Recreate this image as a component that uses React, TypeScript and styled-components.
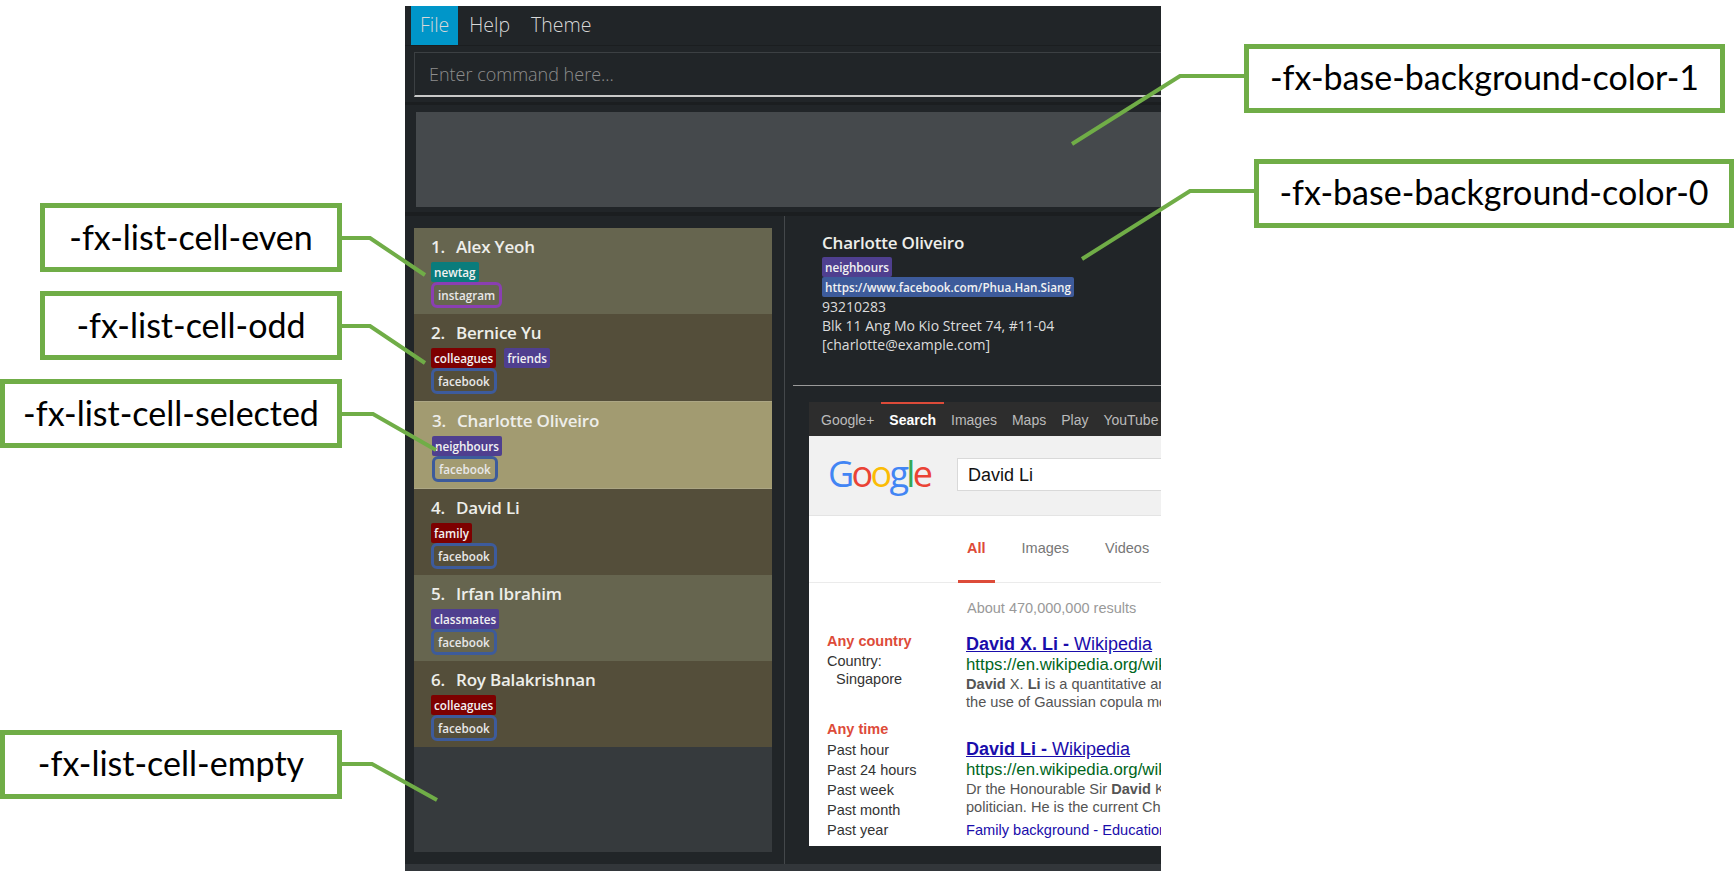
import styled, { createGlobalStyle } from "styled-components";

const GlobalStyle = createGlobalStyle`
  html, body {
    margin: 0;
    background: #fff;
    font-family: "Open Sans", "Noto Sans", sans-serif;
  }
`;

const Page = styled.div`
  position: relative;
  display: grid;
  grid-template-columns: 405px 756px 1fr;
  width: 1735px;
  height: 871px;
  overflow: hidden;
`;

// Callouts
const LeftNotes = styled.div`
  display: flex;
  flex-direction: column;
  align-items: flex-end;
  padding: 203px 63px 0 0;
`;
const RightNotes = styled.div`
  display: flex;
  flex-direction: column;
  padding: 44px 0 0 83px;
`;
const Note = styled.div<{ $w: number; $mt?: number; $ml?: number; $lh?: number }>`
  box-sizing: border-box;
  flex: none;
  width: ${({ $w }) => $w}px;
  height: 69px;
  margin-top: ${({ $mt = 0 }) => $mt}px;
  margin-left: ${({ $ml = 0 }) => $ml}px;
  border: 5px solid #70ad47;
  background: #fff;
  color: #000;
  font: 34px/${({ $lh = 56 }) => $lh}px Lato, "Liberation Sans", sans-serif;
  text-align: center;
  white-space: nowrap;
`;
const Leaders = styled.svg`
  position: absolute;
  inset: 0;
  pointer-events: none;
`;

// App window
const Window = styled.div`
  display: flex;
  flex-direction: column;
  margin-top: 6px;
  height: 865px;
  overflow: hidden;
  background: #212528;
  color: #e4e4e4;
`;
const MenuBar = styled.div`
  display: flex;
  flex: none;
  height: 39px;
  padding-left: 6px;
  background: #212528;
  border-bottom: 1px solid #1b1e20;
`;
const MenuItem = styled.div<{ $active?: boolean }>`
  padding: 0 9px;
  margin-right: ${({ $active }) => ($active ? 2 : 3)}px;
  background: ${({ $active }) => ($active ? "#0096c9" : "transparent")};
  color: #d8d8d8;
  font-size: 19.5px;
  font-weight: 300;
  line-height: 38px;
`;
const CommandRow = styled.div`
  flex: none;
  height: 59px;
  padding: 6px 0 0 9px;
  box-sizing: border-box;
  border-bottom: 3px solid #1b1e20;
`;
const CommandBox = styled.div`
  box-sizing: border-box;
  height: 45px;
  padding-left: 14px;
  width: 760px;
  border: 1px solid #3c4043;
  border-bottom: 2px solid #c8c8c8;
  color: #8d8d8d;
  font-size: 18px;
  font-weight: 300;
  line-height: 42px;
  white-space: nowrap;
`;
const ResultRow = styled.div`
  flex: none;
  height: 111px;
  box-sizing: border-box;
  padding: 7px 0 0 11px;
  border-bottom: 4px solid #1b1e20;
`;
const ResultBox = styled.div`
  width: 760px;
  height: 95px;
  background: #45494c;
`;
const Body = styled.div`
  flex: 1;
  display: grid;
  grid-template-columns: 380px 1fr;
  min-height: 0;
`;
const ListPane = styled.div`
  padding: 12px 12px 12px 9px;
  border-right: 1px solid #44484b;
  min-height: 0;
`;
const List = styled.div`
  display: flex;
  flex-direction: column;
  height: 100%;
  background: #363a3d;
`;
const CellKinds = {
  even: "#66654f",
  odd: "#544e3a",
  selected: "#a29b71",
};
const Cell = styled.div<{ $kind: keyof typeof CellKinds }>`
  box-sizing: border-box;
  height: ${({ $kind }) => ($kind === "selected" ? 88 : 86.3)}px;
  padding: ${({ $kind }) => ($kind === "selected" ? "6px 0 0 18px" : "6px 0 0 17px")};
  background: ${({ $kind }) => CellKinds[$kind]};
  border: ${({ $kind }) => ($kind === "selected" ? "1px solid #aca684" : "none")};
  border-width: 1px 0;
`;
const Name = styled.div`
  display: flex;
  gap: 11px;
  color: #eeeeea;
  font-size: 17px;
  font-weight: 600;
  line-height: 26px;
  letter-spacing: -0.2px;
`;
const TagRow = styled.div`
  display: flex;
  gap: 8px;
  height: 20px;
  margin-top: 2px;
`;
const Tag = styled.span<{ $bg: string }>`
  display: inline-block;
  padding: 0 3px;
  height: 20px;
  border-radius: 2px;
  background: ${({ $bg }) => $bg};
  color: #f2f2f2;
  font-size: 11.7px;
  font-weight: 600;
  line-height: 20px;
  white-space: nowrap;
`;
const OutlineTag = styled.span<{ $line: string }>`
  display: inline-block;
  box-sizing: border-box;
  height: 26px;
  padding: 0 4px;
  border: 3px solid ${({ $line }) => $line};
  border-radius: 6px;
  color: #e8e8e8;
  font-size: 11.7px;
  font-weight: 600;
  line-height: 20px;
  white-space: nowrap;
`;
const LinkRow = styled.div`
  height: 26px;
`;

// Detail pane
const DetailPane = styled.div`
  display: flex;
  flex-direction: column;
  min-height: 0;
  padding-bottom: 18px;
  overflow: hidden;
`;
const Details = styled.div`
  flex: none;
  height: 170px;
  box-sizing: border-box;
  padding: 15px 0 0 29px;
  border-bottom: 1px solid #9a9a9a;
  margin-left: 8px;
`;
const DetailName = styled(Name)`
  line-height: 24px;
`;
const DetailTags = styled.div`
  display: flex;
  flex-direction: column;
  align-items: flex-start;
  margin-top: 2px;
`;
const DetailLine = styled.div`
  color: #dcdcdc;
  font-size: 14px;
  line-height: 19px;
  white-space: nowrap;
`;

// Google page in the browser pane
const Shot = styled.div`
  flex: 1;
  width: 420px;
  margin: 16px 0 0 24px;
  background: #fff;
  font-family: "Liberation Sans", Arial, sans-serif;
  overflow: hidden;
`;
const GoogleNav = styled.div`
  display: flex;
  gap: 15px;
  height: 34px;
  padding-left: 12px;
  background: #2d2d2d;
  color: #bbb;
  font-size: 14px;
  line-height: 36px;
  white-space: nowrap;
`;
const NavItem = styled.span<{ $on?: boolean }>`
  position: relative;
  color: ${({ $on }) => ($on ? "#fff" : "#bbb")};
  font-weight: ${({ $on }) => ($on ? 700 : 400)};
  ${({ $on }) =>
    $on &&
    `&::before {
      content: "";
      position: absolute;
      left: -8px;
      right: -8px;
      top: 0;
      height: 2px;
      background: #dd4b39;
    }`}
`;
const SearchHead = styled.div`
  display: flex;
  align-items: flex-start;
  box-sizing: border-box;
  height: 80px;
  padding: 22px 0 0 19px;
  background: #f1f1f1;
  border-bottom: 1px solid #e4e4e4;
`;
const Logo = styled.div`
  flex: none;
  width: 129px;
  font: 500 36px/32px "Open Sans", sans-serif;
  letter-spacing: -2.7px;
`;
const LogoLetter = styled.span<{ $c: string }>`
  color: ${({ $c }) => $c};
`;
const SearchBox = styled.div`
  box-sizing: border-box;
  width: 300px;
  height: 33px;
  padding-left: 10px;
  background: #fff;
  border: 1px solid #d9d9d9;
  color: #111;
  font-size: 18px;
  line-height: 32px;
`;
const Tabs = styled.div`
  display: flex;
  box-sizing: border-box;
  height: 67px;
  padding-left: 158px;
  gap: 36px;
  border-bottom: 1px solid #ebebeb;
  font-size: 14.5px;
  line-height: 65px;
  color: #777;
`;
const Tab = styled.span<{ $on?: boolean }>`
  position: relative;
  color: ${({ $on }) => ($on ? "#dd4b39" : "#777")};
  font-weight: ${({ $on }) => ($on ? 700 : 400)};
  ${({ $on }) =>
    $on &&
    `&::after {
      content: "";
      position: absolute;
      left: -9px;
      right: -9px;
      bottom: -1px;
      height: 3px;
      background: #dd4b39;
    }`}
`;
const ResultsGrid = styled.div`
  display: grid;
  grid-template-columns: 139px 1fr;
  padding: 16px 0 0 18px;
  white-space: nowrap;
`;
const Filters = styled.div`
  padding-top: 32px;
  color: #333;
  font-size: 14.5px;
  line-height: 20.2px;
`;
const FilterHead = styled.div<{ $gap?: number }>`
  margin-top: ${({ $gap = 0 }) => $gap}px;
  color: #dd4b39;
  font-weight: 700;
`;
const Indented = styled.div`
  padding-left: 9px;
  line-height: 17px;
`;
const Count = styled.div`
  color: #999;
  font-size: 14.5px;
  line-height: 18px;
  margin: 0 0 16px 1px;
`;
const Hit = styled.div`
  margin-bottom: 27px;
`;
const HitTitle = styled.div`
  color: #1a0dab;
  font-size: 18px;
  line-height: 22px;
  text-decoration: underline;
`;
const HitUrl = styled.div`
  color: #006621;
  font-size: 16.8px;
  line-height: 20px;
`;
const Snippet = styled.div`
  color: #545454;
  font-size: 14.6px;
  line-height: 18px;
`;
const Sitelinks = styled.div`
  color: #1a0dab;
  font-size: 14.6px;
  line-height: 29px;
`;
const StatusBar = styled.div`
  flex: none;
  height: 7px;
  background: #32363a;
`;

type TagDef = { label: string; bg: string };
const RED = "#7d0000";
const VIOLET = "#4f3f8f";
const TEAL = "#0a7c7c";
const BLUE_LINE = "#3d5b9b";
const PURPLE_LINE = "#8a3fb2";

const people: {
  name: string;
  kind: keyof typeof CellKinds;
  tags: TagDef[];
  link: string;
  line: string;
}[] = [
  { name: "Alex Yeoh", kind: "even", tags: [{ label: "newtag", bg: TEAL }], link: "instagram", line: PURPLE_LINE },
  {
    name: "Bernice Yu",
    kind: "odd",
    tags: [
      { label: "colleagues", bg: RED },
      { label: "friends", bg: VIOLET },
    ],
    link: "facebook",
    line: BLUE_LINE,
  },
  { name: "Charlotte Oliveiro", kind: "selected", tags: [{ label: "neighbours", bg: VIOLET }], link: "facebook", line: BLUE_LINE },
  { name: "David Li", kind: "odd", tags: [{ label: "family", bg: RED }], link: "facebook", line: BLUE_LINE },
  { name: "Irfan Ibrahim", kind: "even", tags: [{ label: "classmates", bg: VIOLET }], link: "facebook", line: BLUE_LINE },
  { name: "Roy Balakrishnan", kind: "odd", tags: [{ label: "colleagues", bg: RED }], link: "facebook", line: BLUE_LINE },
];

const leaders = [
  "342,238 370,238 425,275",
  "342,326 370,326 425,363",
  "342,414 373,414 436,450",
  "342,764 372,764 437,800",
  "1245,76 1180,76 1072,144",
  "1255,191 1190,191 1082,259",
];

const logo: [string, string][] = [
  ["G", "#4285f4"],
  ["o", "#ea4335"],
  ["o", "#fbbc05"],
  ["g", "#4285f4"],
  ["l", "#34a853"],
  ["e", "#ea4335"],
];

export default function App() {
  return (
    <Page>
      <GlobalStyle />
      <LeftNotes>
        <Note $w={302} $lh={58}>-fx-list-cell-even</Note>
        <Note $w={302} $mt={19} $lh={58}>-fx-list-cell-odd</Note>
        <Note $w={342} $mt={19} $lh={58}>-fx-list-cell-selected</Note>
        <Note $w={342} $mt={282}>-fx-list-cell-empty</Note>
      </LeftNotes>

      <Window>
        <MenuBar>
          <MenuItem $active>File</MenuItem>
          <MenuItem>Help</MenuItem>
          <MenuItem>Theme</MenuItem>
        </MenuBar>
        <CommandRow>
          <CommandBox>Enter command here...</CommandBox>
        </CommandRow>
        <ResultRow>
          <ResultBox />
        </ResultRow>
        <Body>
          <ListPane>
            <List>
              {people.map((p, i) => (
                <Cell key={p.name} $kind={p.kind}>
                  <Name>
                    <span>{i + 1}.</span>
                    <span>{p.name}</span>
                  </Name>
                  <TagRow>
                    {p.tags.map((t) => (
                      <Tag key={t.label} $bg={t.bg}>{t.label}</Tag>
                    ))}
                  </TagRow>
                  <LinkRow>
                    <OutlineTag $line={p.line}>{p.link}</OutlineTag>
                  </LinkRow>
                </Cell>
              ))}
            </List>
          </ListPane>
          <DetailPane>
            <Details>
              <DetailName>Charlotte Oliveiro</DetailName>
              <DetailTags>
                <Tag $bg={VIOLET}>neighbours</Tag>
                <Tag $bg="#3d5b9b">https://www.facebook.com/Phua.Han.Siang</Tag>
              </DetailTags>
              <DetailLine>93210283</DetailLine>
              <DetailLine>Blk 11 Ang Mo Kio Street 74, #11-04</DetailLine>
              <DetailLine>[charlotte@example.com]</DetailLine>
            </Details>
            <Shot>
              <GoogleNav>
                <span>Google+</span>
                <NavItem $on>Search</NavItem>
                <span>Images</span>
                <span>Maps</span>
                <span>Play</span>
                <span>YouTube</span>
              </GoogleNav>
              <SearchHead>
                <Logo>
                  {logo.map(([l, c], i) => (
                    <LogoLetter key={i} $c={c}>{l}</LogoLetter>
                  ))}
                </Logo>
                <SearchBox>David Li</SearchBox>
              </SearchHead>
              <Tabs>
                <Tab $on>All</Tab>
                <Tab>Images</Tab>
                <Tab>Videos</Tab>
              </Tabs>
              <ResultsGrid>
                <Filters>
                  <FilterHead>Any country</FilterHead>
                  <div>Country:</div>
                  <Indented>Singapore</Indented>
                  <FilterHead $gap={31}>Any time</FilterHead>
                  <div>Past hour</div>
                  <div>Past 24 hours</div>
                  <div>Past week</div>
                  <div>Past month</div>
                  <div>Past year</div>
                </Filters>
                <div>
                  <Count>About 470,000,000 results</Count>
                  <Hit>
                    <HitTitle><b>David X. Li -</b> Wikipedia</HitTitle>
                    <HitUrl>https://en.wikipedia.org/wiki/David_X._Li</HitUrl>
                    <Snippet><b>David</b> X. <b>Li</b> is a quantitative analyst</Snippet>
                    <Snippet>the use of Gaussian copula models</Snippet>
                  </Hit>
                  <HitTitle><b>David Li -</b> Wikipedia</HitTitle>
                  <HitUrl>https://en.wikipedia.org/wiki/David_Li</HitUrl>
                  <Snippet>Dr the Honourable Sir <b>David</b> Kwok</Snippet>
                  <Snippet>politician. He is the current Chairman</Snippet>
                  <Sitelinks>Family background - Education</Sitelinks>
                </div>
              </ResultsGrid>
            </Shot>
          </DetailPane>
        </Body>
        <StatusBar />
      </Window>

      <RightNotes>
        <Note $w={481}>-fx-base-background-color-1</Note>
        <Note $w={480} $mt={46} $ml={10}>-fx-base-background-color-0</Note>
      </RightNotes>

      <Leaders width="1735" height="871" viewBox="0 0 1735 871">
        {leaders.map((pts) => (
          <polyline key={pts} points={pts} fill="none" stroke="#70ad47" strokeWidth="4" />
        ))}
      </Leaders>
    </Page>
  );
}
